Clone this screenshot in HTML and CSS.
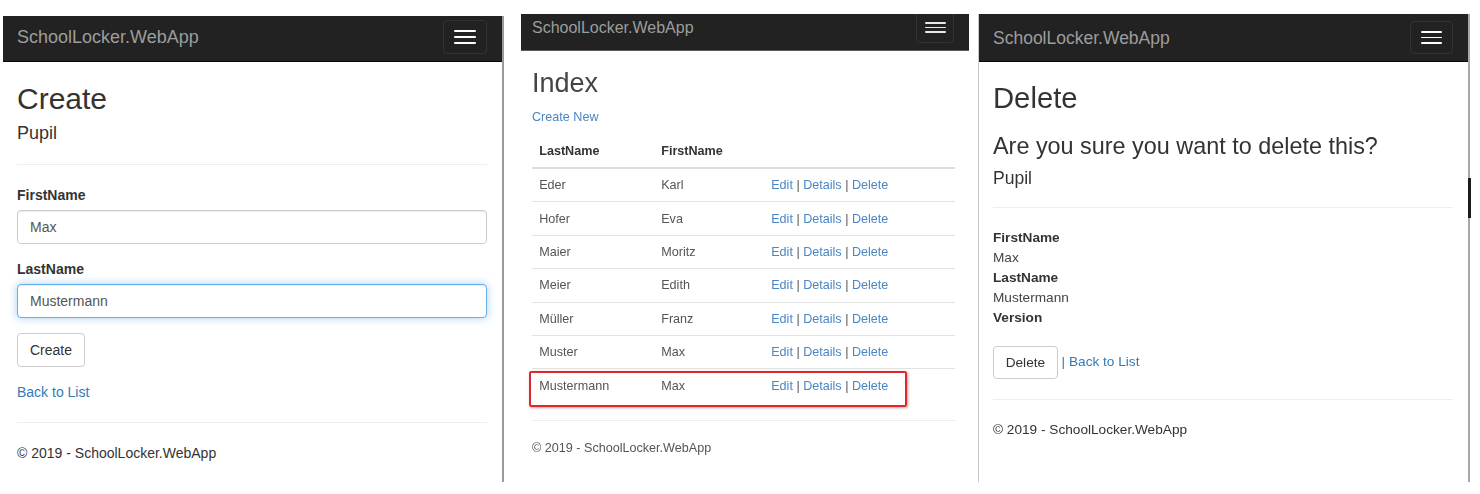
FILE: index.html
```html
<!DOCTYPE html>
<html lang="en">
<head>
<meta charset="utf-8">
<title>SchoolLocker.WebApp</title>
<link rel="stylesheet" href="styles.css">
</head>
<body>
<div class="shots">

  <section class="shot shot-create">
    <nav class="navbar">
      <span class="brand">SchoolLocker.WebApp</span>
      <button class="toggle" type="button"><span class="bar"></span><span class="bar"></span><span class="bar"></span></button>
    </nav>
    <div class="content">
      <h2 class="title">Create</h2>
      <h4 class="subtitle">Pupil</h4>
      <hr class="rule">
      <form class="form">
        <div class="form-group">
          <label class="label">FirstName</label>
          <input class="input" type="text" value="Max">
        </div>
        <div class="form-group">
          <label class="label">LastName</label>
          <input class="input input-focus" type="text" value="Mustermann">
        </div>
        <div class="form-group">
          <button class="btn" type="button">Create</button>
        </div>
      </form>
      <div class="line"><a class="link" href="#">Back to List</a></div>
      <hr class="rule">
      <footer class="footer"><p class="footer-text">© 2019 - SchoolLocker.WebApp</p></footer>
    </div>
  </section>

  <section class="shot shot-index">
    <nav class="navbar">
      <span class="brand">SchoolLocker.WebApp</span>
      <button class="toggle" type="button"><span class="bar"></span><span class="bar"></span><span class="bar"></span></button>
    </nav>
    <div class="content">
      <h2 class="title">Index</h2>
      <p class="para"><a class="link" href="#">Create New</a></p>
      <div class="table-wrap">
        <table class="table">
          <colgroup><col class="col-last"><col class="col-first"><col></colgroup>
          <thead>
            <tr><th>LastName</th><th>FirstName</th><th></th></tr>
          </thead>
          <tbody>
            <tr><td>Eder</td><td>Karl</td><td><a class="link" href="#">Edit</a> | <a class="link" href="#">Details</a> | <a class="link" href="#">Delete</a></td></tr>
            <tr><td>Hofer</td><td>Eva</td><td><a class="link" href="#">Edit</a> | <a class="link" href="#">Details</a> | <a class="link" href="#">Delete</a></td></tr>
            <tr><td>Maier</td><td>Moritz</td><td><a class="link" href="#">Edit</a> | <a class="link" href="#">Details</a> | <a class="link" href="#">Delete</a></td></tr>
            <tr><td>Meier</td><td>Edith</td><td><a class="link" href="#">Edit</a> | <a class="link" href="#">Details</a> | <a class="link" href="#">Delete</a></td></tr>
            <tr><td>Müller</td><td>Franz</td><td><a class="link" href="#">Edit</a> | <a class="link" href="#">Details</a> | <a class="link" href="#">Delete</a></td></tr>
            <tr><td>Muster</td><td>Max</td><td><a class="link" href="#">Edit</a> | <a class="link" href="#">Details</a> | <a class="link" href="#">Delete</a></td></tr>
            <tr><td>Mustermann</td><td>Max</td><td><a class="link" href="#">Edit</a> | <a class="link" href="#">Details</a> | <a class="link" href="#">Delete</a></td></tr>
          </tbody>
        </table>
        <div class="highlight"></div>
      </div>
      <hr class="rule">
      <footer class="footer"><p class="footer-text">© 2019 - SchoolLocker.WebApp</p></footer>
    </div>
  </section>

  <section class="shot shot-delete">
    <nav class="navbar">
      <span class="brand">SchoolLocker.WebApp</span>
      <button class="toggle" type="button"><span class="bar"></span><span class="bar"></span><span class="bar"></span></button>
    </nav>
    <div class="content">
      <h2 class="title">Delete</h2>
      <h3 class="question">Are you sure you want to delete this?</h3>
      <h4 class="subtitle">Pupil</h4>
      <hr class="rule">
      <dl class="details">
        <dt class="term">FirstName</dt>
        <dd class="desc">Max</dd>
        <dt class="term">LastName</dt>
        <dd class="desc">Mustermann</dd>
        <dt class="term">Version</dt>
        <dd class="desc"></dd>
      </dl>
      <form class="form">
        <div class="line actions"><button class="btn" type="button">Delete</button> <span class="sep">|</span> <a class="link" href="#">Back to List</a></div>
      </form>
      <hr class="rule rule-end">
      <footer class="footer"><p class="footer-text">© 2019 - SchoolLocker.WebApp</p></footer>
    </div>
    <span class="scroll-mark"></span>
  </section>

</div>
</body>
</html>
```
FILE: styles.css
```css
* { box-sizing: border-box; }

html, body {
  margin: 0;
  padding: 0;
  background: #fff;
}

body {
  width: 1480px;
  height: 494px;
  overflow: hidden;
  font-family: "Liberation Sans", Arial, sans-serif;
  color: #333;
  font-size: 14px;
  line-height: 20px;
}

.shots {
  display: flex;
  align-items: flex-start;
}

.shot {
  position: relative;
  flex: none;
}

/* ---------- shared pieces ---------- */
.navbar {
  display: flex;
  justify-content: space-between;
  align-items: flex-start;
  background: #222;
  overflow: hidden;
}

.brand {
  color: #9d9d9d;
  white-space: nowrap;
}

.toggle {
  display: flex;
  flex-direction: column;
  flex: none;
  background: transparent;
  border: 1px solid #333;
  border-radius: 4px;
  cursor: pointer;
}

.bar {
  display: block;
  background: #fff;
  border-radius: 1px;
}

.title, .subtitle, .question {
  font-weight: normal;
  line-height: 1.1;
  color: #333;
}

.rule {
  height: 0;
  border: 0;
  border-top: 1px solid #eee;
}

.link {
  color: #337ab7;
  text-decoration: none;
}

.btn {
  display: inline-block;
  font-family: inherit;
  color: #333;
  background: #fff;
  border: 1px solid #ccc;
  border-radius: 4px;
  vertical-align: middle;
}

.footer-text { margin: 0; }

/* ---------- panel 1 : Create ---------- */
.shot-create {
  margin: 16px 0 0 3px;
  width: 501px;
  height: 466px;
  border-right: 2px solid #9a9a9a;
}

.shot-create .navbar {
  height: 46px;
  border-bottom: 1px solid #080808;
  padding: 0 15px 0 14px;
}

.shot-create .brand {
  margin-top: 11px;
  font-size: 18px;
  line-height: 20px;
}

.shot-create .toggle {
  margin-top: 4px;
  width: 44px;
  height: 34px;
  padding: 9px 10px;
  gap: 4px;
}

.shot-create .bar { width: 22px; height: 2px; }

.shot-create .content { padding: 0 15px 0 14px; }

.shot-create .title { font-size: 30px; margin: 20px 0 9px; }
.shot-create .subtitle { font-size: 18px; margin: 9px 0 10px; }
.shot-create .rule { margin: 20px 0; }

.form { margin: 0; }
.form-group { margin-bottom: 15px; }

.label {
  display: block;
  font-weight: bold;
  font-size: 14px;
  line-height: 20px;
  margin-bottom: 5px;
}

.input {
  display: block;
  width: 100%;
  height: 34px;
  padding: 6px 12px;
  font-family: inherit;
  font-size: 14px;
  line-height: 20px;
  color: #555;
  background: #fff;
  border: 1px solid #ccc;
  border-radius: 4px;
  box-shadow: inset 0 1px 1px rgba(0, 0, 0, .075);
  outline: none;
}

.input-focus {
  border-color: #66afe9;
  box-shadow: inset 0 1px 1px rgba(0, 0, 0, .075), 0 0 8px rgba(102, 175, 233, .6);
}

.shot-create .btn {
  padding: 6px 12px;
  font-size: 14px;
  line-height: 20px;
}

.line { line-height: 20px; }

/* ---------- panel 2 : Index (scaled, blurry capture) ---------- */
.shot-index {
  margin-top: 14px;
  width: 474px;
  height: 468px;
  padding: 0 9px 0 17px;
  font-size: 12.6px;
  line-height: 18px;
  filter: blur(0.35px);
}

.shot-index .navbar {
  height: 37px;
  border-bottom: 1px solid #5c5c5c;
  padding: 0 15px 0 11px;
}

.shot-index .brand {
  margin-top: 5px;
  font-size: 16px;
  line-height: 18px;
}

.shot-index .toggle {
  margin-top: -2px;
  width: 38px;
  height: 31px;
  padding: 9px 8px;
  gap: 3px;
}

.shot-index .bar { width: 21px; height: 2px; background: #e8e8e8; }

.shot-index .content { padding: 0 14px 0 11px; }

.shot-index .title { font-size: 27px; margin: 18px 0 9px; color: #444; }

.shot-index .para { margin: 0 0 9px; }

.shot-index .link { color: #4a86c4; }

.table-wrap { position: relative; }

.table {
  width: 100%;
  border-collapse: collapse;
  table-layout: fixed;
  margin-bottom: 18px;
  font-size: 12.6px;
  line-height: 18px;
  color: #555;
}

.col-last { width: 122px; }
.col-first { width: 110px; }

.table th,
.table td {
  padding: 7.2px;
  text-align: left;
  vertical-align: top;
  border-top: 1px solid #e2e2e2;
  white-space: nowrap;
}

.table th {
  border-top: 0;
  border-bottom: 2px solid #ddd;
  color: #333;
  font-weight: bold;
}

.highlight {
  position: absolute;
  left: -3px;
  top: 236px;
  width: 378px;
  height: 36px;
  border: 2px solid #e3262b;
  border-radius: 2px;
  box-shadow: 1px 1px 3px rgba(0, 0, 0, .35);
}

.shot-index .rule { margin: 18px 0; }
.shot-index .footer-text { color: #555; }

/* ---------- panel 3 : Delete ---------- */
.shot-delete {
  margin-top: 14px;
  width: 492px;
  height: 468px;
  border-left: 1px solid #c8c8c8;
  border-right: 2px solid #a8a8a8;
  font-size: 13.65px;
  line-height: 19.5px;
}

.shot-delete .navbar {
  height: 48px;
  border-bottom: 1px solid #080808;
  padding: 0 15px 0 14px;
}

.shot-delete .brand {
  margin-top: 15px;
  font-size: 17.5px;
  line-height: 19.5px;
}

.shot-delete .toggle {
  margin-top: 7px;
  width: 43px;
  height: 33px;
  padding: 9px 10px;
  gap: 4px;
}

.shot-delete .bar { width: 21px; height: 2px; }

.shot-delete .content { padding: 0 15px 0 14px; }

.shot-delete .title { font-size: 29.25px; margin: 20px 0 9.75px; }
.shot-delete .question { font-size: 23.4px; margin: 19.5px 0 9.75px; }
.shot-delete .subtitle { font-size: 17.55px; margin: 9.75px 0 9.75px; }
.shot-delete .rule { margin: 19px 0 20px; }
.shot-delete .rule-end { margin-top: 20px; }

.details { margin: 0 0 18.5px; line-height: 19.8px; }
.term { font-weight: bold; }
.desc { margin: 0; color: #444; }

.shot-delete .line { line-height: 19.5px; }

.shot-delete .btn {
  padding: 5.85px 11.7px;
  font-size: 13.65px;
  line-height: 19.5px;
}

.sep { color: #337ab7; }

.scroll-mark {
  position: absolute;
  top: 164px;
  right: -3px;
  width: 3px;
  height: 40px;
  background: #1c1c1c;
}
```
